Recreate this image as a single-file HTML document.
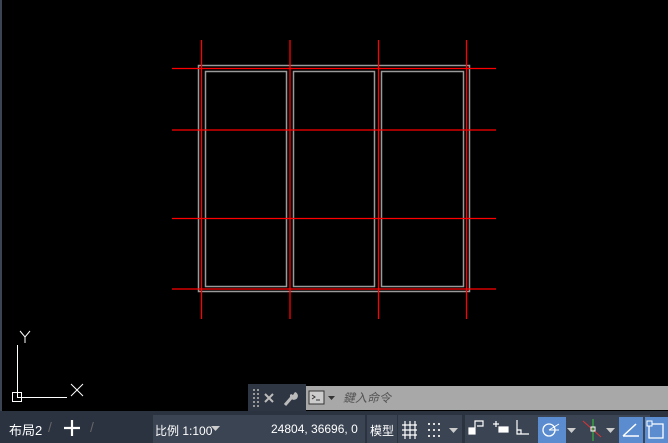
<!DOCTYPE html>
<html><head><meta charset="utf-8"><style>
html,body{margin:0;padding:0;width:668px;height:443px;overflow:hidden;background:#000;font-family:"Liberation Sans","Noto Sans CJK SC",sans-serif}
.abs{position:absolute}
</style></head><body>
<div class="abs" style="left:0;top:0;width:2px;height:411px;background:#3b4453"></div>
<svg class="abs" style="left:0;top:0" width="668" height="411">
<g fill="none" stroke="#9a9a9a" stroke-width="1.5">
<rect x="198.5" y="65.5" width="271" height="226"/>
<rect x="205.5" y="71.5" width="81" height="215"/>
<rect x="293.5" y="71.5" width="81" height="215"/>
<rect x="381.5" y="71.5" width="82" height="215"/>
</g>
<g stroke="#ff0000" stroke-width="1.3">
<line x1="201.5" y1="40" x2="201.5" y2="319"/>
<line x1="290" y1="40" x2="290" y2="319"/>
<line x1="378.5" y1="40" x2="378.5" y2="319"/>
<line x1="466.5" y1="40" x2="466.5" y2="319"/>
<line x1="172" y1="68.5" x2="496" y2="68.5"/>
<line x1="172" y1="130" x2="496" y2="130"/>
<line x1="172" y1="218.5" x2="496" y2="218.5"/>
<line x1="172" y1="289" x2="496" y2="289"/>
</g>
<g stroke="#fff" stroke-width="1" fill="none">
<line x1="17.5" y1="345" x2="17.5" y2="398"/>
<line x1="17" y1="397.5" x2="67" y2="397.5"/>
<rect x="12.5" y="392.5" width="9" height="9"/>
<line x1="71" y1="384" x2="83" y2="396"/><line x1="83" y1="384" x2="71" y2="396"/>
<path d="M20 331 L25 337 L30 331 M25 337 L25 343"/>
</g>
</svg>
<div class="abs" style="left:248px;top:384px;width:58px;height:27px;background:#2f3643"></div>
<svg class="abs" style="left:248px;top:384px" width="58" height="27">
<g fill="#999"><rect x="5" y="5" width="2" height="2"/><rect x="9" y="5" width="2" height="2"/><rect x="5" y="9" width="2" height="2"/><rect x="9" y="9" width="2" height="2"/><rect x="5" y="13" width="2" height="2"/><rect x="9" y="13" width="2" height="2"/><rect x="5" y="17" width="2" height="2"/><rect x="9" y="17" width="2" height="2"/><rect x="5" y="21" width="2" height="2"/><rect x="9" y="21" width="2" height="2"/></g>
<path d="M17 10 L25 18 M25 10 L17 18" stroke="#bbb" stroke-width="2"/>
<path d="M37 21 L44 13" stroke="#bbb" stroke-width="3"/>
<path d="M42 11 A4 4 0 1 0 47 8 L45 11 L43 10 Z" fill="#bbb"/>
</svg>
<div class="abs" style="left:306px;top:386px;width:362px;height:24px;background:#a8a8a8"></div>
<svg class="abs" style="left:306px;top:386px" width="36" height="24">
<rect x="3" y="5" width="15" height="13" fill="#ccc" stroke="#333"/>
<path d="M6 9 L9 11 L6 13 M10 14 H14" stroke="#333" fill="none"/>
<path d="M22 10 L29 10 L25.5 14 Z" fill="#333"/>
</svg>
<div class="abs" style="left:343px;top:389px;color:#555;font-size:12px;font-style:italic">鍵入命令</div>
<div class="abs" style="left:0;top:411px;width:668px;height:32px;background:#2b3240"></div>
<div class="abs" style="left:9px;top:420px;color:#fff;font-size:13px">布局2</div>
<div class="abs" style="left:48px;top:419px;color:#666;font-size:14px">/</div>
<svg class="abs" style="left:63px;top:419px" width="18" height="18"><path d="M9 1 V17 M1 9 H17" stroke="#fff" stroke-width="2.2"/></svg>
<div class="abs" style="left:90px;top:419px;color:#666;font-size:14px">/</div>
<div class="abs" style="left:153px;top:415px;width:72px;height:28px;background:#3b4453"></div>
<div class="abs" style="left:155px;top:422px;color:#fff;font-size:12px">比例 1:100</div>
<svg class="abs" style="left:211px;top:426px" width="10" height="6"><path d="M0 0 H9 L4.5 5 Z" fill="#ccc"/></svg>
<div class="abs" style="left:225px;top:415px;width:140px;height:28px;background:#3b4453"></div>
<div class="abs" style="left:271px;top:422px;color:#fff;font-size:12px">24804, 36696, 0</div>
<div class="abs" style="left:367px;top:415px;width:30px;height:28px;background:#3b4453"></div>
<div class="abs" style="left:370px;top:422px;color:#fff;font-size:12px">模型</div>
<div class="abs" style="left:398px;top:415px;width:64px;height:28px;background:#3b4453"></div>
<svg class="abs" style="left:398px;top:415px" width="64" height="28">
<path d="M4 10 H19 M4 15 H19 M4 20 H19 M7 6 V24 M12 6 V24 M17 6 V24" stroke="#fff" stroke-width="1.2"/>
<g fill="#ddd"><rect x="30" y="8" width="2" height="2"/><rect x="35" y="8" width="2" height="2"/><rect x="40" y="8" width="2" height="2"/><rect x="30" y="14" width="2" height="2"/><rect x="35" y="14" width="2" height="2"/><rect x="40" y="14" width="2" height="2"/><rect x="30" y="20" width="2" height="2"/><rect x="35" y="20" width="2" height="2"/><rect x="40" y="20" width="2" height="2"/></g>
<path d="M51 13 H60 L55.5 18 Z" fill="#ccc"/>
</svg>
<div class="abs" style="left:465px;top:415px;width:185px;height:28px;background:#3b4453"></div>
<svg class="abs" style="left:465px;top:415px" width="203" height="28">
<g stroke="#fff" fill="none" stroke-width="1.2">
<rect x="4" y="13" width="6" height="6" fill="#fff"/><path d="M10 13 V6 H18 V11 H12"/>
<path d="M28 9 H34 M31 6 V12"/><rect x="34" y="12" width="9" height="5" fill="#fff"/>
<path d="M52 5 V19 H64 M52 15 H56 V19"/>
</g>
<rect x="73" y="2" width="28" height="26" fill="#5a8ccf"/>
<circle cx="84" cy="15" r="6" stroke="#fff" fill="none" stroke-width="1.3"/><path d="M84 15 L94 9 M84 15 H94" stroke="#fff"/>
<path d="M102 13 H111 L106.5 18 Z" fill="#ccc"/>
<path d="M118 6 L136 22" stroke="#d33"/><path d="M128 4 V26" stroke="#3c3"/><rect x="126" y="12" width="4" height="4" fill="none" stroke="#fff"/>
<path d="M141 13 H150 L145.5 18 Z" fill="#ccc"/>
<rect x="154" y="2" width="24" height="26" fill="#5a8ccf"/>
<path d="M158 21 H174 M158 21 L171 9" stroke="#fff" stroke-width="1.5" fill="none"/>
<rect x="180" y="2" width="23" height="26" fill="#5a8ccf"/>
<path d="M184 9 H198 V23 H184 Z" stroke="#fff" fill="none" stroke-width="1.3"/><rect x="182" y="6" width="5" height="5" fill="#5a8ccf" stroke="#fff"/>
</svg>
</body></html>
